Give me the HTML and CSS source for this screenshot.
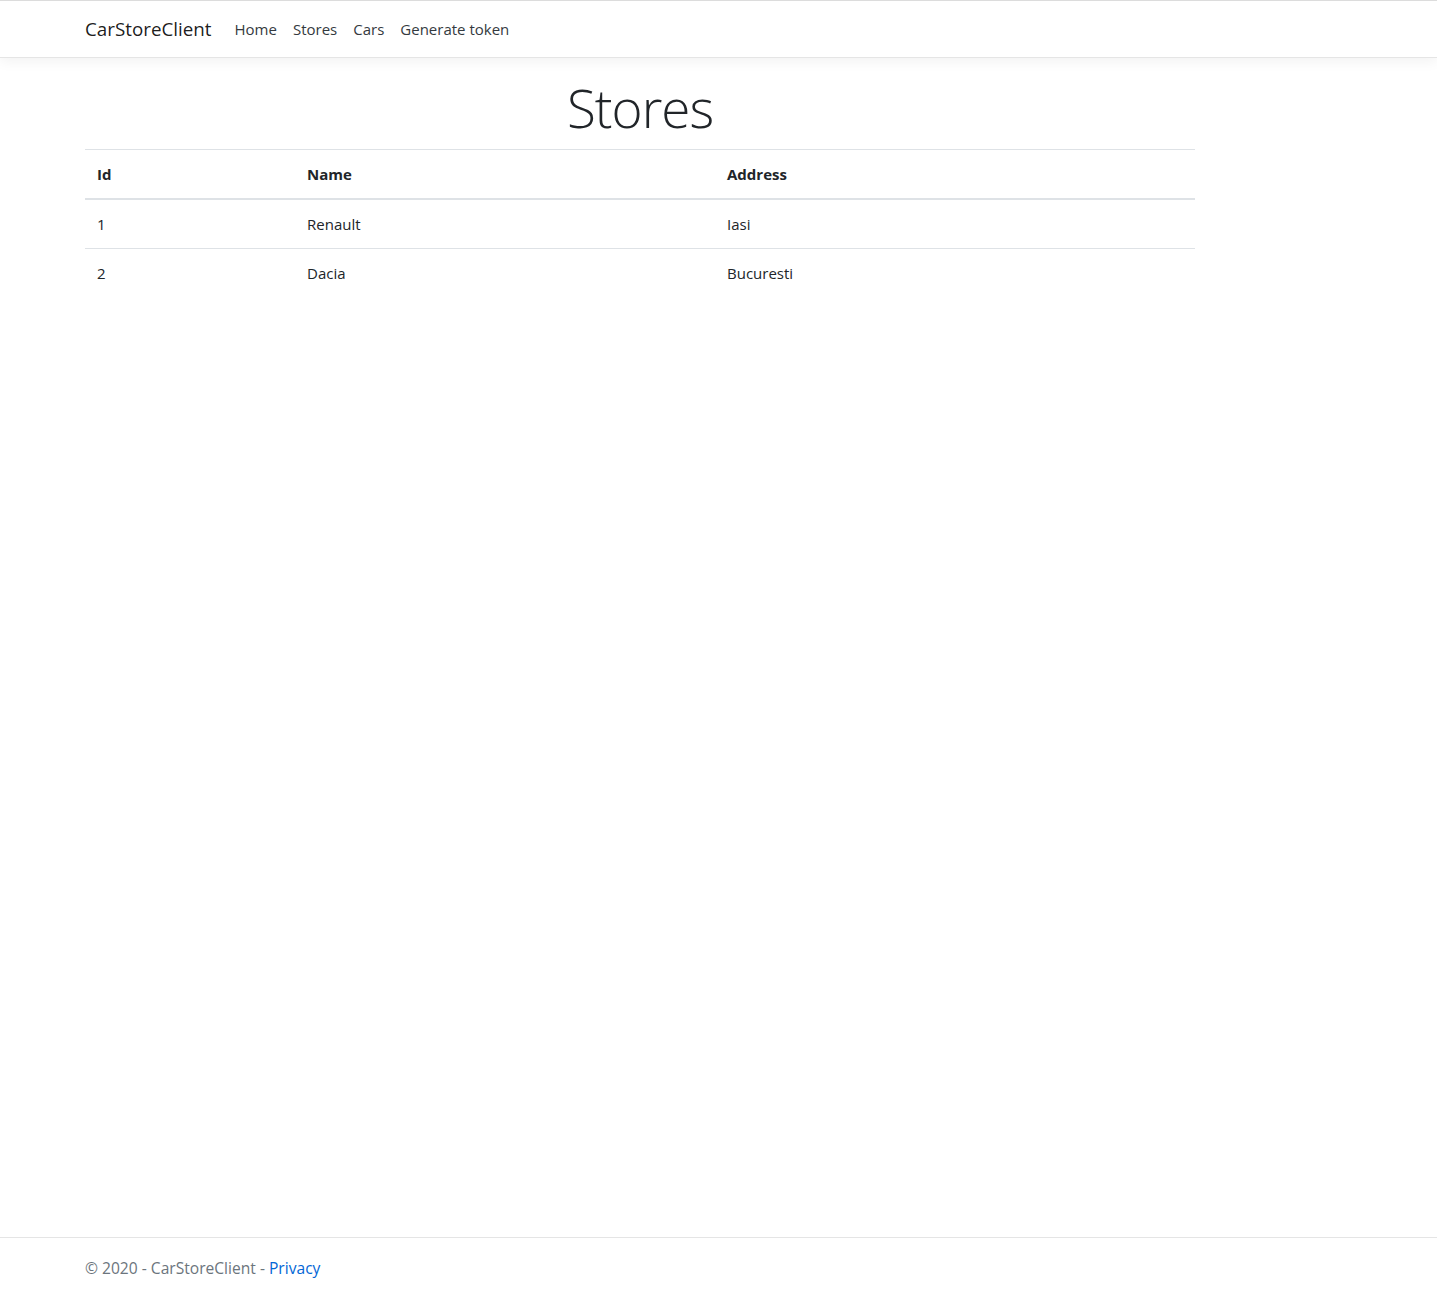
FILE: index.html
```html
<!DOCTYPE html>
<html lang="en">
<head>
<meta charset="utf-8">
<title>Stores - CarStoreClient</title>
<link rel="stylesheet" href="styles.css">
</head>
<body>
<div class="page">
  <header class="navbar">
    <div class="container nav-inner">
      <a class="brand" href="#">CarStoreClient</a>
      <ul class="nav">
        <li><a class="nav-link" href="#">Home</a></li>
        <li><a class="nav-link" href="#">Stores</a></li>
        <li><a class="nav-link" href="#">Cars</a></li>
        <li><a class="nav-link" href="#">Generate token</a></li>
      </ul>
    </div>
  </header>
  <main class="container main">
    <h1 class="title">Stores</h1>
    <table class="table">
      <thead>
        <tr>
          <th class="col-id">Id</th>
          <th class="col-name">Name</th>
          <th>Address</th>
        </tr>
      </thead>
      <tbody>
        <tr><td>1</td><td>Renault</td><td>Iasi</td></tr>
        <tr><td>2</td><td>Dacia</td><td>Bucuresti</td></tr>
      </tbody>
    </table>
  </main>
</div>
<footer class="footer">
  <div class="container">&copy; 2020 - CarStoreClient - <a href="#" class="link">Privacy</a></div>
</footer>
</body>
</html>
```
FILE: styles.css
```css
* { box-sizing: border-box; }
html, body { margin: 0; padding: 0; }
body {
  font-family: "Open Sans", "Noto Sans", sans-serif;
  font-size: 16px;
  line-height: 1.5;
  color: #212529;
  background: #fff;
  border-top: 1px solid #dcdcdc;
}
.page { min-height: calc(100vh - 55px); }
.container {
  width: 1140px;
  margin-left: 70px;
  padding: 0 15px;
}
a { text-decoration: none; }
.navbar {
  border-bottom: 1px solid #e5e5e5;
  box-shadow: 0 4px 12px rgba(0,0,0,.05);
  padding: 8px 0;
  margin-bottom: 16px;
}
.nav-inner { display: flex; align-items: center; }
.brand {
  font-size: 18.8px;
  line-height: 30px;
  padding: 5px 0;
  margin-right: 15px;
  color: rgba(0,0,0,.9);
  white-space: nowrap;
}
.nav { display: flex; list-style: none; margin: 0; padding: 0; }
.nav-link {
  display: block;
  padding: 8px 8px;
  font-size: 15px;
  color: #343a40;
}
.title {
  font-size: 53px;
  font-weight: 300;
  letter-spacing: -1px;
  line-height: 67px;
  margin: 0 0 8px;
  text-align: center;
  color: #212529;
}
.table {
  width: 100%;
  border-collapse: collapse;
  margin-bottom: 16px;
  font-size: 15px;
}
.table th, .table td {
  padding: 12px;
  line-height: 24px;
  text-align: left;
  vertical-align: top;
  border-top: 1px solid #dee2e6;
}
.table thead th {
  border-bottom: 2px solid #dee2e6;
  font-weight: 700;
}
.col-id { width: 210px; }
.col-name { width: 420px; }
.footer {
  border-top: 1px solid #e5e5e5;
  line-height: 60px;
  height: 54px;
  color: #6c757d;
  font-size: 15.6px;
  white-space: nowrap;
}
.link { color: #0366d6; }
```
